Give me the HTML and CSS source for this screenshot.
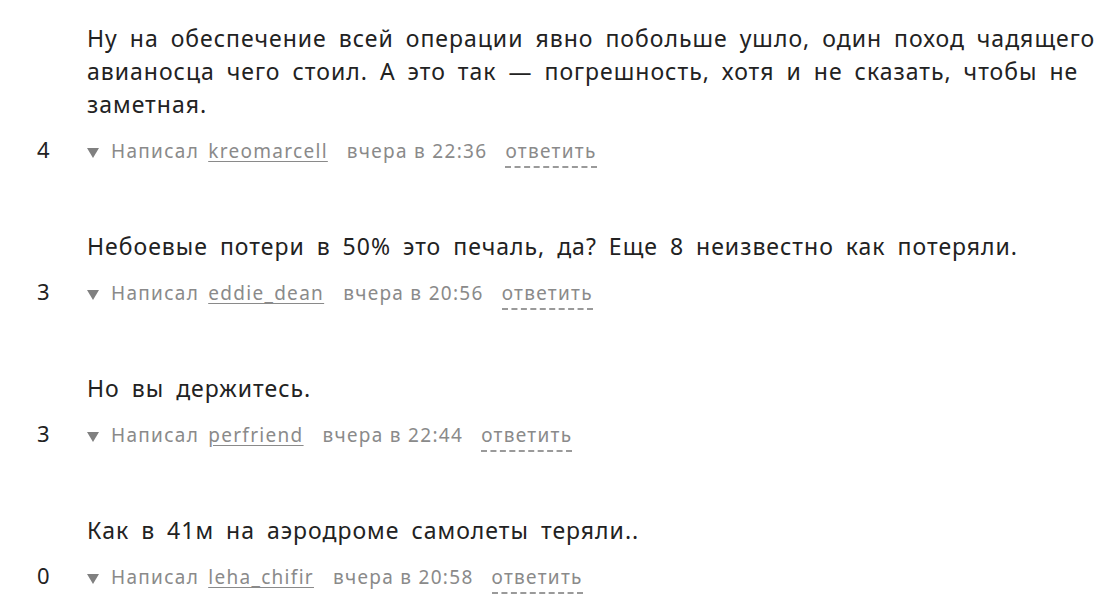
FILE: index.html
```html
<!DOCTYPE html>
<html lang="ru">
<head>
    <meta charset="UTF-8">
    <title>Комментарии</title>
    <link rel="stylesheet" href="styles.css">
</head>
<body>
    <div class="comments">
        <div class="comment">
            <p class="comment-text">Ну на обеспечение всей операции явно побольше ушло, один поход чадящего авианосца чего стоил. А это так — погрешность, хотя и не сказать, чтобы не заметная.</p>
            <div class="comment-meta">
                <span class="score">4</span>
                <span class="toggle"></span>
                <span class="label">Написал</span>
                <a class="author" href="#">kreomarcell</a>
                <span class="time">вчера в 22:36</span>
                <a class="reply" href="#">ответить</a>
            </div>
        </div>
        <div class="comment">
            <p class="comment-text">Небоевые потери в 50% это печаль, да? Еще 8 неизвестно как потеряли.</p>
            <div class="comment-meta">
                <span class="score">3</span>
                <span class="toggle"></span>
                <span class="label">Написал</span>
                <a class="author" href="#">eddie_dean</a>
                <span class="time">вчера в 20:56</span>
                <a class="reply" href="#">ответить</a>
            </div>
        </div>
        <div class="comment">
            <p class="comment-text">Но вы держитесь.</p>
            <div class="comment-meta">
                <span class="score">3</span>
                <span class="toggle"></span>
                <span class="label">Написал</span>
                <a class="author" href="#">perfriend</a>
                <span class="time">вчера в 22:44</span>
                <a class="reply" href="#">ответить</a>
            </div>
        </div>
        <div class="comment">
            <p class="comment-text">Как в 41м на аэродроме самолеты теряли..</p>
            <div class="comment-meta">
                <span class="score">0</span>
                <span class="toggle"></span>
                <span class="label">Написал</span>
                <a class="author" href="#">leha_chifir</a>
                <span class="time">вчера в 20:58</span>
                <a class="reply" href="#">ответить</a>
            </div>
        </div>
    </div>
</body>
</html>
```

FILE: styles.css
```css
* {
    margin: 0;
    padding: 0;
    box-sizing: border-box;
}

body {
    background-color: #fff;
    font-family: 'Noto Sans', 'Open Sans', sans-serif;
    color: #222;
}

.comments {
    width: 1104px;
    padding: 22px 0 0 87px;
}

.comment {
    margin-bottom: 62px;
}

.comment:last-child {
    margin-bottom: 0;
}

.comment-text {
    font-size: 23px;
    line-height: 33px;
    letter-spacing: 1px;
    word-spacing: 5px;
}

.comment-meta {
    position: relative;
    display: flex;
    align-items: baseline;
    margin-top: 15px;
    font-size: 19px;
    line-height: 26px;
    letter-spacing: 1.3px;
    color: #8a8a8a;
}

.score {
    position: absolute;
    left: -50px;
    color: #222;
    font-size: 22px;
    letter-spacing: 0;
}

.toggle {
    align-self: center;
    width: 0;
    height: 0;
    border-left: 6px solid transparent;
    border-right: 6px solid transparent;
    border-top: 10px solid #808080;
    margin: 2px 12px 0 0;
}

.label {
    margin-right: 9px;
}

.author {
    color: #8a8a8a;
    text-decoration: underline;
    text-underline-offset: 3px;
    margin-right: 19px;
}

.time {
    margin-right: 18px;
}

.reply {
    color: #8a8a8a;
    text-decoration: none;
    border-bottom: 2px dashed #9a9a9a;
    line-height: 30px;
}
```
